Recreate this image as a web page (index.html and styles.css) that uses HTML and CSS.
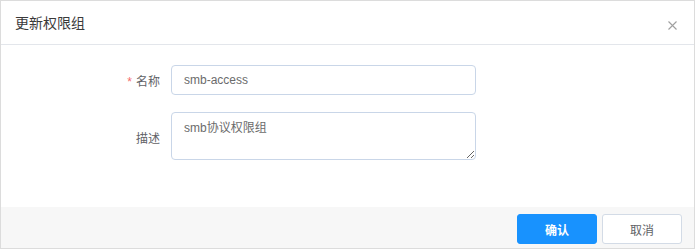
FILE: index.html
```html
<!DOCTYPE html>
<html lang="zh">
<head>
<meta charset="utf-8">
<title>更新权限组</title>
<link rel="stylesheet" href="styles.css">
</head>
<body>
<div class="dialog">
  <div class="dialog-header">
    <span class="dialog-title">更新权限组</span>
    <button class="dialog-close" aria-label="关闭">
      <svg width="9" height="9" viewBox="0 0 9 9"><path d="M0.5 0.5L8.5 8.5M8.5 0.5L0.5 8.5" stroke="#a0a0a0" stroke-width="1.1" fill="none"/></svg>
    </button>
  </div>
  <div class="dialog-body">
    <div class="form-item">
      <label class="form-label"><span class="required">*</span>名称</label>
      <input class="form-input" type="text" value="smb-access">
    </div>
    <div class="form-item form-item-area">
      <label class="form-label">描述</label>
      <textarea class="form-textarea">smb协议权限组</textarea>
    </div>
  </div>
  <div class="dialog-footer">
    <button class="btn btn-primary">确认</button>
    <button class="btn btn-default">取消</button>
  </div>
</div>
</body>
</html>
```

FILE: styles.css
```css
* { box-sizing: border-box; }
html, body { margin: 0; padding: 0; background: #fff; }
body {
  font-family: "Liberation Sans", "Noto Sans CJK SC", sans-serif;
  font-size: 12px;
  color: #606266;
}
.dialog {
  width: 695px;
  height: 249px;
  border: 1px solid #dcdcdc;
  display: flex;
  flex-direction: column;
  background: #fff;
}
.dialog-header {
  height: 44px;
  border-bottom: 1px solid #e3e6eb;
  display: flex;
  align-items: center;
  justify-content: space-between;
  padding: 0 14px 0 14px;
}
.dialog-title {
  font-size: 14px;
  color: #3a3a3a;
  margin-top: -1px;
}
.dialog-close {
  border: 0;
  background: none;
  padding: 0;
  width: 9px;
  height: 9px;
  display: flex;
  margin-top: 5px;
  margin-right: 3px;
}
.dialog-body {
  flex: 1;
  padding: 20px 0 0 0;
}
.form-item {
  display: flex;
  align-items: center;
  margin-bottom: 17px;
}
.form-label {
  width: 170px;
  padding-right: 11px;
  text-align: right;
  color: #5f6266;
  font-size: 12px;
}
.required {
  color: #f56c6c;
  margin-right: 4px;
}
.form-input {
  width: 305px;
  height: 30px;
  border: 1px solid #c9d6e8;
  border-radius: 4px;
  padding: 0 12px;
  font-family: inherit;
  font-size: 12px;
  color: #6b6b6b;
  outline: none;
}
.form-item-area .form-label {
  padding-top: 3px;
}
.form-textarea {
  width: 305px;
  height: 48px;
  border: 1px solid #c9d6e8;
  border-radius: 4px;
  padding: 6px 12px;
  font-family: inherit;
  font-size: 12px;
  line-height: 18px;
  color: #6b6b6b;
  outline: none;
  resize: vertical;
  display: block;
}
.dialog-footer {
  height: 41px;
  background: #f7f7f7;
  display: flex;
  justify-content: flex-end;
  align-items: flex-start;
  gap: 5px;
  padding: 7px 12px 0 0;
}
.btn {
  width: 80px;
  height: 30px;
  border-radius: 3px;
  font-family: inherit;
  font-size: 12px;
  padding: 0;
  cursor: pointer;
}
.btn-primary {
  background: #1892fe;
  border: 1px solid #1892fe;
  color: #fff;
  font-weight: bold;
}
.btn-default {
  background: #fff;
  border: 1px solid #d3dbe6;
  color: #606266;
}
```
